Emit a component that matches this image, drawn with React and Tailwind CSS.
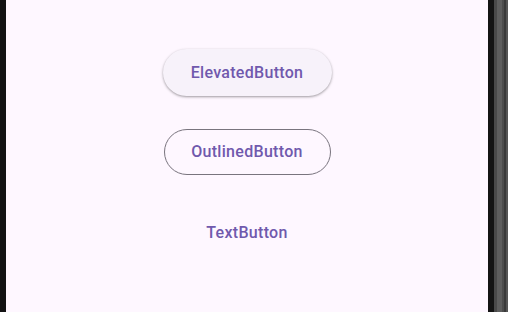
export default function App() {
  return (
    <div className="flex h-[312px] w-[508px] overflow-hidden bg-[#111111]" style={{ fontFamily: "Roboto, 'Noto Sans', sans-serif" }}>
      <div className="w-[6px] shrink-0 bg-[#131313]" />
      <main className="flex w-[482px] shrink-0 flex-col items-center bg-[#fef7ff] pt-[49px]">
        <button className="flex h-[47px] w-[169px] items-center justify-center rounded-full bg-[#f7f2fa] text-[16px] font-medium tracking-[0.3px] text-[#7059ad] shadow-[0_1px_3px_rgba(0,0,0,0.25),0_1px_2px_rgba(0,0,0,0.15)]">
          ElevatedButton
        </button>
        <button className="mt-[33px] flex h-[46px] w-[167px] items-center justify-center rounded-full border border-[#79747e] text-[16px] font-medium tracking-[0.3px] text-[#7059ad]">
          OutlinedButton
        </button>
        <button className="mt-[35px] flex h-[46px] w-[110px] items-center justify-center rounded-full text-[16px] font-medium tracking-[0.3px] text-[#7059ad]">
          TextButton
        </button>
      </main>
      <div className="w-[6px] shrink-0 bg-[#141414]" />
      <div className="flex w-[14px] shrink-0">
        <div className="w-[3px] bg-[#4a4a4a]" />
        <div className="w-[5px] bg-[#5e5e5e]" />
        <div className="w-[2px] bg-[#4d4d4d]" />
        <div className="w-[2px] bg-[#3a3a3a]" />
        <div className="w-[2px] bg-[#555555]" />
      </div>
    </div>
  );
}
